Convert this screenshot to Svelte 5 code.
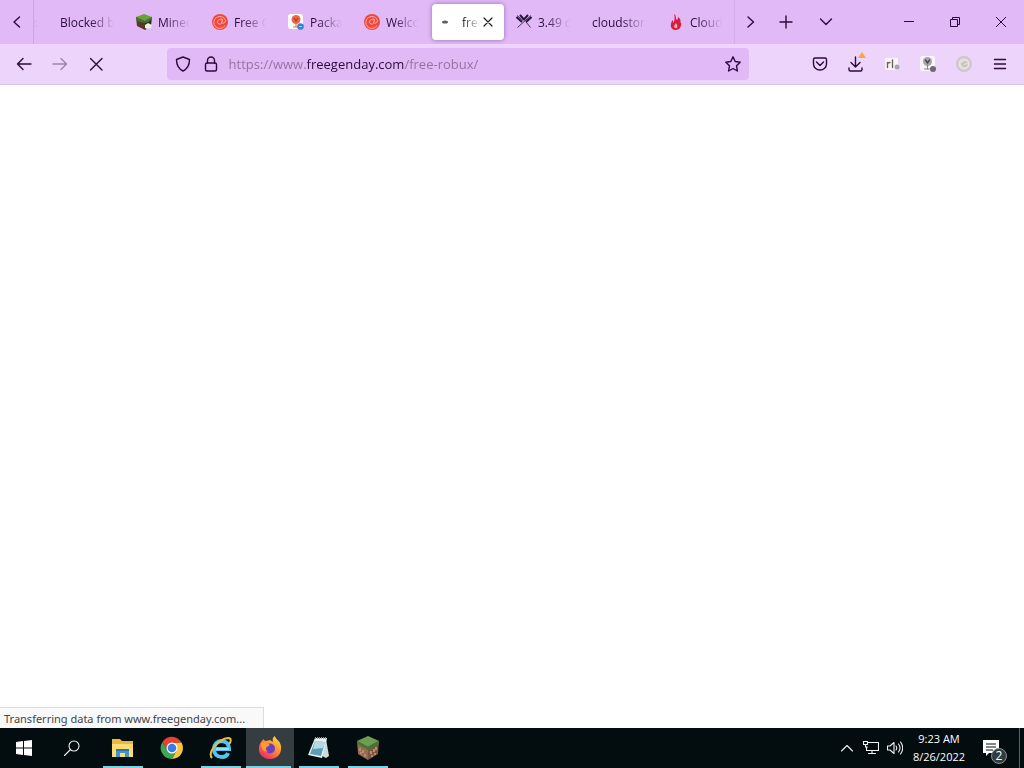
<script lang="ts">
  type Tab = { label: string; icon?: string; active?: boolean };

  const tabs: Tab[] = [
    { label: 'Robux f', icon: 'blank' },
    { label: 'Blocked by' },
    { label: 'Minecraft', icon: 'grass' },
    { label: 'Free Gen', icon: 'swirl' },
    { label: 'Package', icon: 'pin' },
    { label: 'Welcome', icon: 'swirl' },
    { label: 'freegenday', icon: 'loading', active: true },
    { label: '3.49 cloud', icon: 'cross' },
    { label: 'cloudstorage' },
    { label: 'Cloud', icon: 'flame' },
  ];

  const apps = [
    { name: 'File Explorer', icon: 'explorer', running: true },
    { name: 'Google Chrome', icon: 'chrome', running: false },
    { name: 'Internet Explorer', icon: 'ie', running: true },
    { name: 'Firefox', icon: 'firefox', running: true, focused: true },
    { name: 'Notepad', icon: 'notepad', running: true },
    { name: 'Minecraft', icon: 'block', running: true },
  ];

  let url = $state('https://www.freegenday.com/free-robux/');
</script>

{#snippet favicon(name: string)}
  <svg class="favicon" viewBox="0 0 16 16" aria-hidden="true">
    {#if name === 'grass'}
      <path fill="#67a23c" d="M0 3 8 0l8 3-7 4z" />
      <path fill="#573827" d="m0 3 9 4v9l-8-4z" />
      <path fill="#37251d" d="m9 7 7-4-1 9-6 4z" />
      <path fill="#41762b" d="m0 3 9 4v2L6 8v1L3 7v1L0 6zM9 7l7-4v3l-3 1v1L9 9z" />
      <path fill="#e6f0e8" d="m9 11 3-2 4 2-1 3-4 1-2-1z" />
    {:else if name === 'swirl'}
      <circle cx="8" cy="8" r="8" fill="#f0483e" />
      <path
        d="M13 11.500A6 6 0 1 1 13.500 6.500q-.5 3-3 3M10.500 5.500Q8 4 6 6.500T7 10t3.500-4.500L9.500 9.500"
        fill="none"
        stroke="#ffaca0"
      />
    {:else if name === 'pin'}
      <rect width="15" height="15" rx="3" fill="#fff" />
      <circle cx="8" cy="5.500" r="4.500" fill="#ed6944" />
      <path d="m6 4 2 3 2-3" fill="none" stroke="#b8452f" stroke-width="1.500" />
      <path d="M8 9v4M5 13h5" fill="none" stroke="#d0705a" />
      <circle cx="12.500" cy="12.500" r="3.300" fill="#3c7ed2" />
      <path d="M11 12.500h3" stroke="#9fd0fa" />
    {:else if name === 'loading'}
      <ellipse cx="5" cy="8" rx="3" ry="1.600" fill="#5b625f" />
    {:else if name === 'cross'}
      <path d="m1 1.500 6 5M15 1.500 1.500 13.500M10 8l4.500 5.500" fill="none" stroke="#4c315e" />
      <path d="m4 1 4 4.500L12 1M.5 3 6 8M15.500 3 10 8" fill="none" stroke="#28143c" stroke-width="2" />
    {:else if name === 'flame'}
      <path
        fill="#d71e3b"
        d="M6 0c3 2 1 4 3 6 1-1 1-2 1-3 3 2 3 4 2 6l1-1c1 5-2 8-5 8s-6-2-5-6c0-2 1-3 2-4v3c2-3 2-5 1-9z"
      />
      <path fill="#f5a9b9" d="M7 14c-2-2 0-3 1-5 1 2 2 3 1 5z" />
    {/if}
  </svg>
{/snippet}

{#snippet appIcon(name: string)}
  <svg class="app-icon" viewBox="0 0 24 24" aria-hidden="true">
    {#if name === 'explorer'}
      <path fill="#e9b846" d="M1 3h8l2 2h11v16H1z" />
      <path fill="#ffdc72" d="M1 8h21v13H1z" />
      <path fill="#4294c9" d="M5 13h13v8h-4v-4H9v4H5z" />
      <path fill="#2873a9" d="M5 13h13v2H5z" />
    {:else if name === 'chrome'}
      <path fill="#e84134" d="M2.500 6A11 11 0 0 1 21.500 6.500L12 7 7.500 15z" />
      <path fill="#f9c63a" d="M21.500 6.500A11 11 0 0 1 12 23l4.500-8.500L12 7z" />
      <path fill="#3da651" d="M2.500 6A11 11 0 0 0 12 23l4.500-8.500-9 .5z" />
      <circle cx="12" cy="12" r="5.500" fill="#fff" />
      <circle cx="12" cy="12" r="4.300" fill="#367de9" />
    {:else if name === 'ie'}
      <path
        d="M4 13h16c0-5-3-8-7.500-8A7.800 7.800 0 0 0 5 13c0 5 3 8 8 8 3 0 5-1 6-4"
        fill="none"
        stroke="#55c3f0"
        stroke-width="4"
      />
      <path d="M7 13h13" stroke="#91e0fa" stroke-width="2" />
      <path d="M3 22C-2 16 10 3 19 2c4 0 3 4 1 6" fill="none" stroke="#e9bf42" stroke-width="2" />
    {:else if name === 'firefox'}
      <defs>
        <linearGradient id="fox" x1="1" y1="0" x2="0.300" y2="1">
          <stop offset="0" stop-color="#ffe64d" />
          <stop offset="0.450" stop-color="#ff9b2f" />
          <stop offset="1" stop-color="#f02c65" />
        </linearGradient>
      </defs>
      <path
        fill="url(#fox)"
        d="M3 6c1-1 2-2 2-3 1 1 2 2 3 2l4-1 3 2c-1-3 0-5 2-6 0 3 5 4 6 10 1 8-4 13-11 13S0 18 1 12c0-3 1-4 2-6z"
      />
      <circle cx="12" cy="12.500" r="5" fill="#6b3fbe" />
      <path fill="#ff9b31" d="M3 7c3-1 6-1 9 2l-3 2c-2 1-1 4 1 4-4 2-7-2-7-8z" />
    {:else if name === 'notepad'}
      <path fill="#cfdadc" d="m19 3 3 17-3 2-4-2z" />
      <path fill="#e4f2f4" d="M8 2h12l-5 20-14-3z" />
      <path fill="#5b9fb4" d="m8 5 10 1-4 14-11-2z" />
      <path fill="#b3dae2" d="m8 5 10 1-2 6-10 1z" />
      <path d="M8 2h12" stroke="#8b999f" stroke-width="2" stroke-dasharray="1 1" />
    {:else if name === 'block'}
      <path fill="#6c9e50" d="m1 5 11-5 11 5-11 6z" />
      <path fill="#956b4d" d="m1 5 11 6v13L2 18z" />
      <path fill="#7a5540" d="m12 11 11-6-1 13-10 6z" />
      <path fill="#487236" d="m1 5 11 6 11-6v3l-3 2v1l-3 1-2 1-3 1-3-2-3-1-2-2-3-1z" />
      <path
        d="M4 12v3M7 14v3M9 18v3M4 17h2M15 15v3M18 13v3M20 11v3M15 20h2M19 17v2"
        stroke="#b98a70"
        stroke-width="2"
      />
    {/if}
  </svg>
{/snippet}

<div class="screen">
  <header>
    <div class="tab-bar">
      <button class="scroll left" aria-label="Scroll tabs left">
        <svg class="line" viewBox="0 0 16 16"><path d="M10.500 3 5 8l5.500 5" /></svg>
      </button>
      <div class="tabs" role="tablist">
        {#each tabs as tab}
          <button class="tab" class:active={tab.active} role="tab" aria-selected={!!tab.active}>
            {#if tab.icon}{@render favicon(tab.icon)}{/if}
            <span class="label">{tab.label}</span>
            {#if tab.active}
              <svg class="line close" viewBox="0 0 16 16"><path d="m4 4 8 8M12 4l-8 8" /></svg>
            {/if}
          </button>
        {/each}
      </div>
      <button class="scroll right" aria-label="Scroll tabs right">
        <svg class="line" viewBox="0 0 16 16"><path d="m5 3 5.500 5L5 13" /></svg>
      </button>
      <button class="tab-tool" aria-label="New tab">
        <svg class="line" viewBox="0 0 16 16"><path d="M8 2v12M2 8h12" /></svg>
      </button>
      <button class="tab-tool" aria-label="List all tabs">
        <svg class="line" viewBox="0 0 16 16"><path d="m2.500 5 5.500 5.500L13.500 5" /></svg>
      </button>
      <div class="window-controls">
        <button aria-label="Minimize">
          <svg class="line thin" viewBox="0 0 16 16"><path d="M3 7.500h10" /></svg>
        </button>
        <button aria-label="Restore">
          <svg class="line thin" viewBox="0 0 16 16">
            <path d="M3.500 5.500h7v7h-7zM5.500 5.500v-2h7v7h-2" />
          </svg>
        </button>
        <button aria-label="Close">
          <svg class="line thin" viewBox="0 0 16 16"><path d="m3 3 10 10M13 3 3 13" /></svg>
        </button>
      </div>
    </div>

    <nav class="nav-bar">
      <button class="tool" aria-label="Back">
        <svg class="line" viewBox="0 0 16 16"><path d="M15 8H1.500M7 2.500 1.500 8 7 13.500" /></svg>
      </button>
      <button class="tool" aria-label="Forward" disabled>
        <svg class="line" viewBox="0 0 16 16"><path d="M1 8h13.500M9 2.500 14.500 8 9 13.500" /></svg>
      </button>
      <button class="tool" aria-label="Stop">
        <svg class="line" viewBox="0 0 16 16"><path d="m2.500 2.500 11.500 11.500M14 2.500 2.500 14" /></svg>
      </button>
      <span class="spring"></span>
      <div class="url-bar">
        <button class="url-tool" aria-label="Tracking protection">
          <svg class="line" viewBox="0 0 16 16">
            <path d="M8 1 14.500 3.500c0 5-1.500 9-6.500 11.500C3 12.500 1.500 8.500 1.500 3.500z" />
          </svg>
        </button>
        <button class="url-tool" aria-label="Site security">
          <svg class="line" viewBox="0 0 16 16">
            <rect x="2.500" y="7" width="11" height="8" rx="1.500" />
            <path d="M4.500 7V4.500a3.500 3.500 0 0 1 7 0V7" />
          </svg>
        </button>
        <input type="text" aria-label="Address" bind:value={url} spellcheck="false" />
        <button class="url-tool" aria-label="Bookmark this page">
          <svg class="line" viewBox="0 0 16 16">
            <path d="m8 .8 2.200 4.700 5 .7-3.700 3.500.9 5.300L8 12.500 3.600 15l.9-5.300L.8 6.200l5-.7z" />
          </svg>
        </button>
      </div>
      <span class="spring"></span>
      <button class="tool" aria-label="Save to Pocket">
        <svg class="line" viewBox="0 0 16 16">
          <path d="M3 2h10q1.500 0 1.500 1.500V8a6.500 6 0 0 1-13 0V3.500Q1.500 2 3 2zM4.500 6 8 9.500 11.500 6" />
        </svg>
      </button>
      <button class="tool" aria-label="Downloads">
        <svg class="line" viewBox="0 0 16 16">
          <path d="M7.500 1v10M3 6.500 7.500 11 12 6.500M1 12v1.500Q1 15 2.500 15h10q1.500 0 1.500-1.500V12" />
        </svg>
        <svg class="alert" viewBox="0 0 8 8"><path fill="#ffa436" d="M4 1 8 7H0z" /></svg>
      </button>
      <button class="tool" aria-label="RL extension">
        <svg class="line" viewBox="0 0 16 16">
          <rect class="plate" x="1" y="2" width="13" height="12" rx="1" />
          <path class="olive" d="M3.500 11.500v-5M3.500 8q0-1.500 2.500-1.500M8.500 4v7.500" />
          <circle class="grey" cx="13" cy="11" r="2.500" />
        </svg>
      </button>
      <button class="tool" aria-label="Pin extension">
        <svg class="line" viewBox="0 0 16 16">
          <rect class="plate" width="15" height="15" rx="2" />
          <circle class="grey" cx="7.500" cy="5.500" r="4.500" />
          <path d="m5.500 4 2 3 2-3" stroke="#504558" />
          <path d="M7.500 9v4M4.500 13h5" stroke="#8b8290" stroke-width="1" />
          <circle class="dark" cx="13" cy="13" r="3" />
        </svg>
      </button>
      <button class="tool" aria-label="Swirl extension">
        <svg class="line" viewBox="0 0 16 16">
          <circle cx="8" cy="8" r="8" fill="#cec5ce" stroke="none" />
          <circle cx="8" cy="8" r="5" fill="#dfdbd5" stroke="#eae5df" />
          <path d="M11 9q-3 3-5-1M7 7l3-1" stroke="#c3bbb5" />
        </svg>
      </button>
      <button class="tool" aria-label="Open menu">
        <svg class="line" viewBox="0 0 16 16"><path d="M2.500 3.500h11M2.500 8h11M2.500 12.500h11" /></svg>
      </button>
    </nav>
  </header>

  <main>
    <p class="status" role="status">Transferring data from www.freegenday.com...</p>
  </main>

  <footer class="taskbar">
    <button class="system" aria-label="Start">
      <svg class="glyph" viewBox="0 0 16 16">
        <path fill="#fff" d="m0 2 7-1v6.500H0zM8 1l8-1v7.500H8zM0 8.500h7V15l-7-1zM8 8.500h8V16l-8-1z" />
      </svg>
    </button>
    <button class="system" aria-label="Search">
      <svg class="glyph line light" viewBox="0 0 16 16">
        <circle cx="10" cy="6" r="5" />
        <path d="m6.500 9.500-6 6" />
      </svg>
    </button>
    <div class="apps">
      {#each apps as app}
        <button class="app" class:running={app.running} class:focused={app.focused} aria-label={app.name}>
          {@render appIcon(app.icon)}
        </button>
      {/each}
    </div>
    <div class="tray">
      <button class="tray-tool" aria-label="Show hidden icons">
        <svg class="glyph line light" viewBox="0 0 16 16"><path d="m2.500 11 5.500-5.500 5.500 5.500" /></svg>
      </button>
      <button class="tray-tool" aria-label="Network">
        <svg class="glyph line light" viewBox="0 0 16 16">
          <path d="M5 2.500h10.500v8H3.500V7M9 10.500v3M5.500 13.500h7M.5 1.500h4v3h-4zM2.500 4.500V7h2" />
        </svg>
      </button>
      <button class="tray-tool" aria-label="Volume">
        <svg class="glyph line light" viewBox="0 0 16 16">
          <path d="M.5 6h2.500L7 2.500v11L3 10H.5zM9 6q1.500 2 0 4M11.500 4q3 4 0 8M13.500 2q4.500 6 0 12" />
        </svg>
      </button>
      <button class="clock">
        <span>9:23 AM</span>
        <span>8/26/2022</span>
      </button>
      <button class="notifications" aria-label="2 notifications">
        <svg class="glyph" viewBox="0 0 16 16">
          <path fill="#fff" d="M0 0h16v13H6l-3 3v-3H0z" />
          <path d="M3 4h10M3 7h10M3 10h7" stroke="#030d10" />
        </svg>
        <span class="badge">2</span>
      </button>
      <button class="desktop" aria-label="Show desktop"></button>
    </div>
  </footer>
</div>

<style>
  :global(body) {
    margin: 0;
  }
  .screen {
    display: flex;
    flex-direction: column;
    min-height: 100vh;
    background: #fff;
    color: #2b0b3d;
    font-family: 'Open Sans', 'Noto Sans', sans-serif;
    font-size: 12px;
  }
  button {
    display: flex;
    align-items: center;
    justify-content: center;
    flex: none;
    margin: 0;
    padding: 0;
    border: none;
    background: none;
    color: inherit;
    font: inherit;
  }
  svg {
    display: block;
    flex: none;
    width: 16px;
    height: 16px;
  }
  .line {
    fill: none;
    stroke: currentColor;
    stroke-width: 1.4;
    stroke-linecap: round;
    stroke-linejoin: round;
  }
  .thin {
    stroke-width: 1;
    stroke-linecap: butt;
    stroke-linejoin: miter;
  }

  /* tabs */
  .tab-bar {
    display: flex;
    height: 44px;
    background: #e0b9f6;
  }
  .scroll {
    box-sizing: border-box;
    width: 34px;
  }
  .scroll.left {
    border-right: 1px solid #cba6df;
  }
  .scroll.right {
    width: 32px;
    border-left: 1px solid #d3ade8;
  }
  .tabs {
    display: flex;
    flex: 1;
    justify-content: flex-end;
    min-width: 0;
    overflow: hidden;
  }
  .tab {
    gap: 6px;
    box-sizing: border-box;
    width: 72px;
    height: 36px;
    margin: 4px 2px;
    padding: 0 8px;
    border-radius: 4px;
  }
  .tab.active {
    background: #fff;
    box-shadow: 0 0 4px rgba(80, 30, 110, 0.5);
  }
  .label {
    flex: 1;
    min-width: 0;
    overflow: hidden;
    text-align: left;
    white-space: nowrap;
    mask-image: linear-gradient(to left, transparent 2px, #000 26px);
  }
  .active .label {
    margin-right: -6px;
    color: #222;
    mask-image: linear-gradient(to left, transparent, #000 16px);
  }
  .close {
    color: #222;
    stroke-width: 1.2;
  }
  .tab-tool {
    width: 40px;
  }
  .window-controls {
    display: flex;
    margin-left: 40px;
  }
  .window-controls button {
    width: 46px;
  }

  /* navigation */
  .nav-bar {
    display: flex;
    align-items: center;
    height: 40px;
    padding: 0 6px;
    border-bottom: 1px solid #d9c6e3;
    background: #edd4fa;
  }
  .tool {
    position: relative;
    width: 36px;
    height: 32px;
  }
  .tool:disabled {
    opacity: 0.4;
  }
  .alert {
    position: absolute;
    top: 3px;
    right: 8px;
    width: 8px;
    height: 8px;
  }
  .plate {
    fill: #f8f4f8;
    stroke: none;
  }
  .olive {
    stroke: #6c6650;
  }
  .grey {
    fill: #aaa2ad;
    stroke: none;
  }
  .dark {
    fill: #706675;
    stroke: none;
  }
  .spring {
    flex: 1;
  }
  .url-bar {
    display: flex;
    align-items: center;
    flex: 11;
    height: 32px;
    padding: 0 2px;
    border-radius: 4px;
    background: #e0b9f6;
  }
  .url-tool {
    width: 28px;
    height: 32px;
  }
  input {
    flex: 1;
    min-width: 0;
    height: 28px;
    padding: 0 4px;
    border: none;
    outline: none;
    /* only the host name is dark */
    background: linear-gradient(to right, #93709f 82px, #2b0b3d 82px, #2b0b3d 179px, #93709f 179px);
    background-clip: text;
    color: transparent;
    caret-color: #2b0b3d;
    font: 13px 'Open Sans', 'Noto Sans', sans-serif;
  }

  /* page */
  main {
    display: flex;
    align-items: flex-end;
    flex: 1;
  }
  .status {
    box-sizing: border-box;
    min-width: 264px;
    margin: 0;
    padding: 3px 14px 1px 4px;
    border: 1px solid #ddd;
    border-width: 1px 1px 0 0;
    background: #f9f9fa;
    color: #444;
    font-family: 'Noto Sans', 'Open Sans', sans-serif;
    font-size: 11px;
    line-height: 16px;
  }

  /* taskbar */
  .taskbar {
    display: flex;
    height: 40px;
    background: #030d10;
    color: #fff;
  }
  .system {
    width: 48px;
  }
  .light {
    color: #f2f2f2;
    stroke-width: 1.1;
  }
  .apps {
    display: flex;
    gap: 1px;
    margin-left: 3px;
  }
  .app {
    position: relative;
    width: 48px;
  }
  .app-icon {
    width: 24px;
    height: 24px;
  }
  .app.running::after {
    content: '';
    position: absolute;
    right: 4px;
    bottom: 0;
    left: 4px;
    height: 2px;
    background: #7ad2e4;
  }
  .app.focused {
    background: #353d40;
  }
  .app.focused::after {
    right: 3px;
    left: 0;
  }
  .tray {
    display: flex;
    margin-left: auto;
  }
  .tray-tool {
    width: 24px;
  }
  .clock {
    flex-direction: column;
    width: 64px;
    font-size: 11px;
    line-height: 18px;
  }
  .notifications {
    position: relative;
    width: 48px;
    padding-right: 8px;
    box-sizing: border-box;
  }
  .badge {
    position: absolute;
    right: 12px;
    bottom: 4px;
    width: 14px;
    height: 14px;
    border: 1px solid #8a9092;
    border-radius: 50%;
    background: #343b3e;
    line-height: 14px;
    text-align: center;
  }
  .desktop {
    width: 5px;
    border-left: 1px solid #596164;
  }
</style>
